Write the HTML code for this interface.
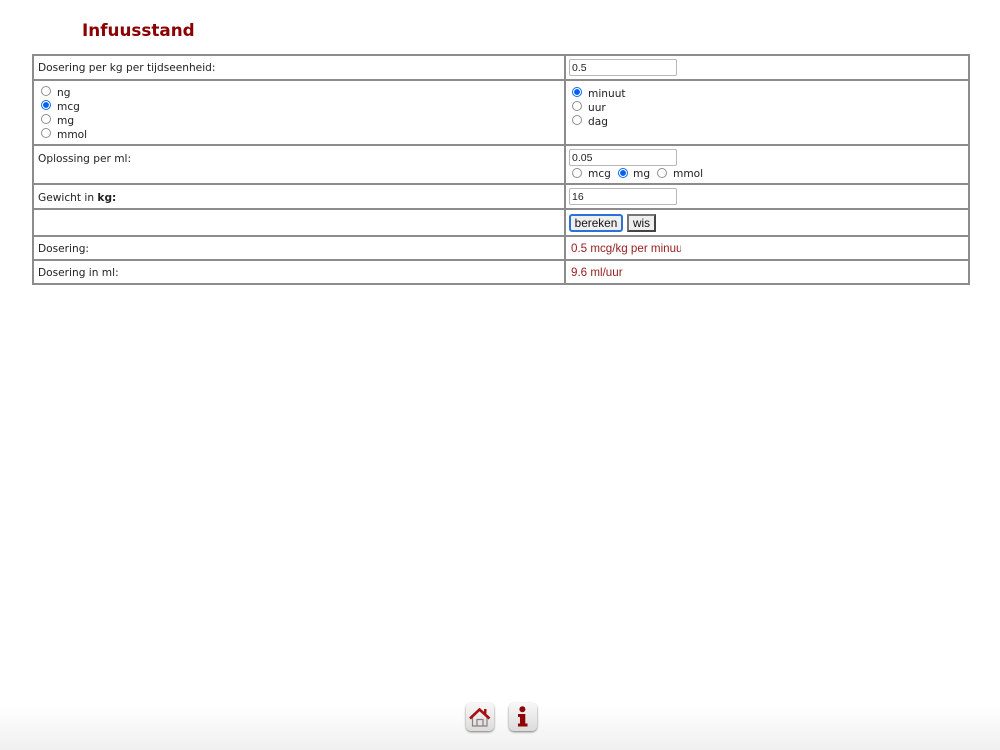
<!DOCTYPE html>
<html><head><meta charset="utf-8"><title>Infuusstand</title>
<style>
html,body{margin:0;padding:0;background:#fff}
body{width:1000px;height:750px;position:relative;overflow:hidden;font-family:"DejaVu Sans",Verdana,sans-serif;font-size:10.6px;color:#222}
.h{position:absolute;left:32px;width:938px;height:2px;background:#8c8c8c}
.v{position:absolute;top:54px;height:231px;width:2px;background:#8c8c8c}
.t{position:absolute;white-space:nowrap;line-height:14px}
.r{position:absolute;width:10px;height:10px;box-sizing:border-box;border:1px solid #8f8f8f;border-radius:50%;background:#fff}
.r.c{border:1px solid #0a6cf0;background:radial-gradient(circle,#0a60ee 0 2.7px,#fff 3.1px)}
.i{position:absolute;left:569px;width:108px;height:17px;box-sizing:border-box;border:1px solid #b8b8b8;border-radius:2px;font:10.5px/16px "Liberation Sans",sans-serif;padding-left:2px;color:#222;background:#fff}
.o{position:absolute;font:11.6px/14px "Liberation Sans",sans-serif;color:#971c1c;white-space:nowrap;overflow:hidden}
.b{position:absolute;box-sizing:border-box;background:#efefef;font:11.8px/14px "Liberation Sans",sans-serif;text-align:center;color:#111}
.foot{position:absolute;left:0;top:695px;width:1000px;height:55px;background:linear-gradient(#fff,#fff 20%,#f0f0f0)}
.ic{position:absolute;top:703px;width:28px;height:28px;border-radius:5px;background:linear-gradient(#f7f7f7,#dcdcdc);box-shadow:0 1px 2px #777}
</style></head><body>
<div class="t" style="left:82px;top:20px;font-size:16.8px;line-height:20px;font-weight:bold;color:#8b0000">Infuusstand</div>

<div class="h" style="top:54px"></div><div class="h" style="top:79px"></div>
<div class="h" style="top:144px"></div><div class="h" style="top:183px"></div>
<div class="h" style="top:208px"></div><div class="h" style="top:235px"></div>
<div class="h" style="top:259px"></div><div class="h" style="top:283px"></div>
<div class="v" style="left:32px"></div><div class="v" style="left:564px"></div><div class="v" style="left:968px"></div>

<div class="t" style="left:38px;top:61px">Dosering per kg per tijdseenheid:</div>
<div class="i" style="top:59px">0.5</div>

<div class="r" style="left:41px;top:86px"></div><div class="t" style="left:57px;top:85.5px">ng</div>
<div class="r c" style="left:41px;top:100px"></div><div class="t" style="left:57px;top:100px">mcg</div>
<div class="r" style="left:41px;top:114px"></div><div class="t" style="left:57px;top:114px">mg</div>
<div class="r" style="left:41px;top:128px"></div><div class="t" style="left:57px;top:128px">mmol</div>

<div class="r c" style="left:572px;top:87px"></div><div class="t" style="left:588px;top:87px">minuut</div>
<div class="r" style="left:572px;top:101px"></div><div class="t" style="left:588px;top:101px">uur</div>
<div class="r" style="left:572px;top:115px"></div><div class="t" style="left:588px;top:115px">dag</div>

<div class="t" style="left:38px;top:152px">Oplossing per ml:</div>
<div class="i" style="top:149px">0.05</div>
<div class="r" style="left:572px;top:168px"></div><div class="t" style="left:588px;top:167px">mcg</div>
<div class="r c" style="left:618px;top:168px"></div><div class="t" style="left:633px;top:167px">mg</div>
<div class="r" style="left:657px;top:168px"></div><div class="t" style="left:673px;top:167px">mmol</div>

<div class="t" style="left:38px;top:191px">Gewicht in <b>kg:</b></div>
<div class="i" style="top:188px">16</div>

<div class="b" style="left:569px;top:214px;width:54px;height:18px;border:2px solid #2a72d8;border-radius:3px">bereken</div>
<div class="b" style="left:627px;top:214px;width:29px;height:18px;border:2px solid;border-color:#777 #444 #444 #777">wis</div>

<div class="t" style="left:38px;top:242px">Dosering:</div>
<div class="o" style="left:571px;top:242px;width:110px">0.5 mcg/kg per minuut</div>
<div class="t" style="left:38px;top:266px">Dosering in ml:</div>
<div class="o" style="left:571px;top:266px">9.6 ml/uur</div>

<div class="foot"></div>
<div class="ic" style="left:466px">
<svg width="28" height="28" viewBox="0 0 28 28"><path d="M6.5 14V23H21V14" fill="none" stroke="#8a7f7a" stroke-width="1.2"/><path d="M11 23V16.5H17V23" fill="none" stroke="#8a7f7a" stroke-width="1.2"/><path d="M4 15.5L13.5 6.5L23.5 15.5" fill="none" stroke="#a80f0f" stroke-width="2.6"/><path d="M18 6H20.5V10.5H18Z" fill="#a80f0f"/></svg>
</div>
<div class="ic" style="left:509px">
<svg width="28" height="28" viewBox="0 0 28 28"><circle cx="13.4" cy="6.3" r="3" fill="#8f0505"/><path d="M9 11H16.3V20.5H18.5V23.5H9V20.5H11V14H9Z" fill="#8f0505"/></svg>
</div>
</body></html>
